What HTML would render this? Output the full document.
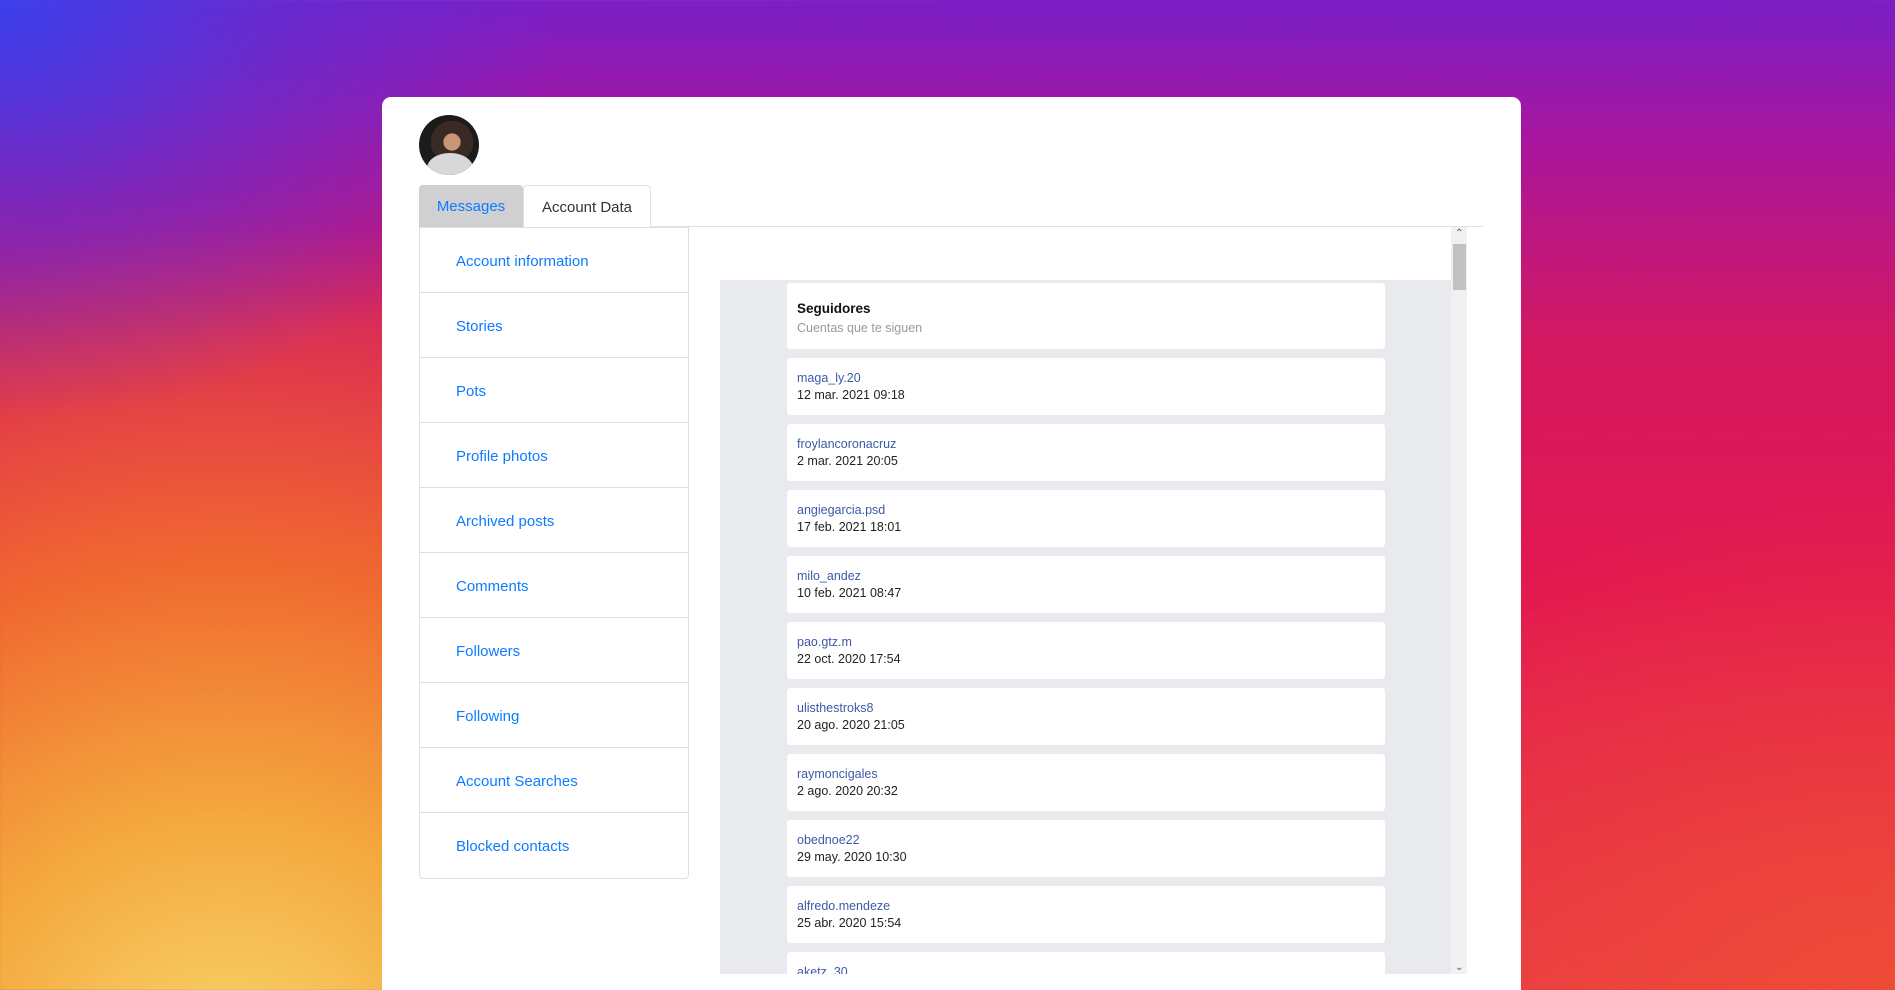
<!DOCTYPE html>
<html><head><meta charset="utf-8"><style>
*{box-sizing:border-box;margin:0;padding:0}
html,body{width:1895px;height:990px;overflow:hidden}
body{font-family:"Liberation Sans",sans-serif;position:relative;
background:
radial-gradient(ellipse 800px 600px at 0% 0%,rgba(60,64,235,1) 0%,rgba(90,50,215,.6) 35%,rgba(120,40,200,0) 70%),
radial-gradient(ellipse 1100px 1000px at 12% 108%,#f8d66e 0%,#f4a93e 25%,#f06a30 50%,rgba(238,70,50,0) 85%),
radial-gradient(ellipse 700px 500px at 100% 100%,rgba(240,80,50,.8) 0%,rgba(240,80,50,0) 100%),
linear-gradient(180deg,#7a1fc8 0%,#a8169e 14%,#d4185f 35%,#e31850 60%,#e83848 100%);}
.card{position:absolute;left:382px;top:97px;width:1139px;height:920px;background:#fff;border-radius:9px}
.av{position:absolute;left:37px;top:18px;width:60px;height:60px;border-radius:50%;background:radial-gradient(circle at 55% 45%,#c99478 0 18%,#3a2a24 19% 45%,#1b1b1b 46%);overflow:hidden}
.av:after{content:"";position:absolute;left:8px;top:38px;width:46px;height:30px;border-radius:50% 50% 0 0;background:#d8d8da}
.tabs{position:absolute;left:37px;top:88px;height:42px;width:1064px;border-bottom:1px solid #dee2e6}
.tab{position:absolute;top:0;height:42px;line-height:44px;font-size:15px;text-align:center}
.t1{left:0;width:104px;background:#d0d0d2;color:#0d7bff;border-radius:4px 4px 0 0}
.t2{left:104px;width:128px;color:#333;border:1px solid #dee2e6;border-bottom:none;background:#fff;border-radius:4px 4px 0 0}
.list{position:absolute;left:37px;top:130px;width:270px;border:1px solid #dfdfdf;border-radius:0 0 4px 4px}
.li{height:65px;border-bottom:1px solid #dfdfdf;color:#0d7bff;font-size:15px;line-height:67px;padding-left:36px}
.li:last-child{border-bottom:none}
.scroll{position:absolute;left:338px;top:130px;width:747px;height:747px;overflow:hidden}
.grey{position:absolute;left:0;top:53px;width:731px;height:700px;background:#e9eaee}
.sb{position:absolute;left:731px;top:0;width:16px;height:747px;background:#f1f1f1}
.thumb{position:absolute;left:2px;top:17px;width:13px;height:46px;background:#c1c1c1}
.ar{position:absolute;left:4px;font-size:10px;color:#555}
.it{position:absolute;left:67px;width:598px;background:#fff;border-radius:3px;padding-left:10px;font-size:12.5px}
.nm{color:#3d5aa8;position:absolute;top:13px}
.dt{color:#222;position:absolute;top:30px}
</style></head><body>
<div class="card">
<div class="av"></div>
<div class="tabs"><div class="tab t1">Messages</div><div class="tab t2">Account Data</div></div>
<div class="list">
<div class="li">Account information</div><div class="li">Stories</div><div class="li">Pots</div><div class="li">Profile photos</div><div class="li">Archived posts</div><div class="li">Comments</div><div class="li">Followers</div><div class="li">Following</div><div class="li">Account Searches</div><div class="li">Blocked contacts</div>
</div>
<div class="scroll">
<div class="grey">
<div class="it" style="top:3px;height:66px"><div style="position:absolute;top:18px;font-weight:bold;font-size:13.5px;color:#111">Seguidores</div><div style="position:absolute;top:38px;color:#999">Cuentas que te siguen</div></div>
<div class="it" style="top:78px;height:57px"><div class="nm">maga_ly.20</div><div class="dt">12 mar. 2021 09:18</div></div>
<div class="it" style="top:144px;height:57px"><div class="nm">froylancoronacruz</div><div class="dt">2 mar. 2021 20:05</div></div>
<div class="it" style="top:210px;height:57px"><div class="nm">angiegarcia.psd</div><div class="dt">17 feb. 2021 18:01</div></div>
<div class="it" style="top:276px;height:57px"><div class="nm">milo_andez</div><div class="dt">10 feb. 2021 08:47</div></div>
<div class="it" style="top:342px;height:57px"><div class="nm">pao.gtz.m</div><div class="dt">22 oct. 2020 17:54</div></div>
<div class="it" style="top:408px;height:57px"><div class="nm">ulisthestroks8</div><div class="dt">20 ago. 2020 21:05</div></div>
<div class="it" style="top:474px;height:57px"><div class="nm">raymoncigales</div><div class="dt">2 ago. 2020 20:32</div></div>
<div class="it" style="top:540px;height:57px"><div class="nm">obednoe22</div><div class="dt">29 may. 2020 10:30</div></div>
<div class="it" style="top:606px;height:57px"><div class="nm">alfredo.mendeze</div><div class="dt">25 abr. 2020 15:54</div></div>
<div class="it" style="top:672px;height:57px"><div class="nm">aketz_30</div><div class="dt"></div></div>
</div>
<div class="sb"><div class="ar" style="top:1px">&#8963;</div><div class="thumb"></div><div class="ar" style="bottom:1px">&#8964;</div></div>
</div>
</div>
</body></html>
